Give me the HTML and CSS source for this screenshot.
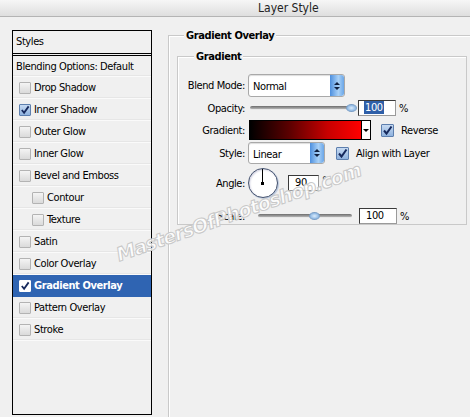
FILE: index.html
```html
<!DOCTYPE html>
<html>

<head>
    <title>Layer Style</title>
    <link rel="stylesheet" href="styles.css">
</head>

<body>
    <div class="titlebar"><span class="title">Layer Style</span></div>

    <div class="main">
        <div class="sidebar">
            <div class="styles-head">Styles</div>
            <div class="item plain">Blending Options: Default</div>
            <div class="item"><span class="cb"></span>Drop Shadow</div>
            <div class="item"><span class="cb on"><svg viewBox="0 0 11 11"><path d="M2 5.5 L4.5 8.5 L9.5 1.5" /></svg></span>Inner Shadow</div>
            <div class="item"><span class="cb"></span>Outer Glow</div>
            <div class="item"><span class="cb"></span>Inner Glow</div>
            <div class="item"><span class="cb"></span>Bevel and Emboss</div>
            <div class="item sub"><span class="cb"></span>Contour</div>
            <div class="item sub"><span class="cb"></span>Texture</div>
            <div class="item"><span class="cb"></span>Satin</div>
            <div class="item"><span class="cb"></span>Color Overlay</div>
            <div class="item selected"><span class="cb on"><svg viewBox="0 0 11 11"><path d="M2 5.5 L4.5 8.5 L9.5 1.5" /></svg></span>Gradient Overlay</div>
            <div class="item"><span class="cb"></span>Pattern Overlay</div>
            <div class="item"><span class="cb"></span>Stroke</div>
        </div>

        <div class="content">
            <div class="group outer">
                <div class="legend">Gradient Overlay</div>
                <div class="group inner">
                    <div class="legend">Gradient</div>
                    <div class="rows">
                        <div class="row row-blend">
                            <label>Blend Mode:</label>
                            <div class="select wide">Normal<span class="spin"><i class="up"></i><i class="down"></i></span></div>
                        </div>
                        <div class="row row-opacity">
                            <label>Opacity:</label>
                            <div class="slider opacity"><span class="thumb"></span></div>
                            <div class="field sel"><span>100</span></div>
                            <span class="unit">%</span>
                        </div>
                        <div class="row row-gradient">
                            <label>Gradient:</label>
                            <div class="swatch"></div>
                            <div class="drop"><i></i></div>
                            <span class="cb on big"><svg viewBox="0 0 11 11"><path d="M2 5.5 L4.5 8.5 L9.5 1.5" /></svg></span>
                            <span class="check-label">Reverse</span>
                        </div>
                        <div class="row row-style">
                            <label>Style:</label>
                            <div class="select narrow">Linear<span class="spin"><i class="up"></i><i class="down"></i></span></div>
                            <span class="cb on big"><svg viewBox="0 0 11 11"><path d="M2 5.5 L4.5 8.5 L9.5 1.5" /></svg></span>
                            <span class="check-label">Align with Layer</span>
                        </div>
                        <div class="row row-angle">
                            <label>Angle:</label>
                            <div class="dial"><span class="hand"></span><span class="dot"></span></div>
                            <div class="field angle">90</div>
                            <span class="deg">&deg;</span>
                        </div>
                        <div class="row row-scale">
                            <label>Scale:</label>
                            <div class="slider scale"><span class="thumb"></span></div>
                            <div class="field">100</div>
                            <span class="unit">%</span>
                        </div>
                    </div>
                </div>
            </div>
        </div>
    </div>

    <div class="watermark">MastersOfPhotoshop.com</div>
</body>

</html>
```

FILE: styles.css
```css
body {
    margin: 0;
    width: 470px;
    height: 417px;
    overflow: hidden;
    background: #f0f0f0;
    font-family: "DejaVu Sans Condensed", "Liberation Sans", sans-serif;
    font-size: 11px;
    letter-spacing: -0.4px;
    color: #000;
    position: relative;
}

.titlebar {
    height: 16px;
    border-bottom: 1px solid #b4b4b4;
    background: linear-gradient(#f6f6f6, #dedede);
    line-height: 16px;
}

.title {
    margin-left: 258px;
    font-size: 12px;
    letter-spacing: 0;
    color: #222;
}

.main {
    display: flex;
    height: 400px;
}

/* left list */
.sidebar {
    margin: 13px 0 0 12px;
    width: 138px;
    height: 383px;
    border: 1px solid #000;
}

.styles-head {
    height: 22px;
    line-height: 22px;
    padding-left: 3px;
    border-bottom: 3px double #000;
}

.item {
    height: 21px;
    display: flex;
    align-items: center;
    padding-left: 6px;
    border-bottom: 1px solid #fafafa;
    box-shadow: inset 0 -1px 0 #e6e6e6;
}

.item.plain {
    height: 20px;
    padding-left: 3px;
}

.item.sub {
    padding-left: 19px;
}

.item.selected {
    background: #2f64b2;
    color: #fff;
    font-weight: bold;
    border-bottom-color: #2f64b2;
    box-shadow: none;
}

.cb {
    width: 10px;
    height: 10px;
    margin-right: 3px;
    border: 1px solid #b3b3b3;
    border-radius: 1px;
    background: linear-gradient(#f4f4f4, #dadada);
    flex: none;
    display: inline-block;
    box-sizing: content-box;
}

.cb svg {
    display: block;
    width: 10px;
    height: 10px;
}

.cb path {
    fill: none;
    stroke: #16295c;
    stroke-width: 2;
}

.cb.on {
    border-color: #5d7fae;
    background: linear-gradient(#c6daf2, #8fb2de);
}

.selected .cb.on {
    border-color: #fff;
    background: #fff;
}

.cb.big {
    width: 11px;
    height: 11px;
}

.cb.big svg {
    width: 11px;
    height: 11px;
}

/* right side */
.content {
    margin-left: 16px;
    flex: 1;
}

.group {
    border-top: 1px solid #c9c9c9;
    border-left: 1px solid #c9c9c9;
    box-shadow: inset 1px 1px 0 #fff;
}

.outer {
    margin-top: 18px;
    height: 400px;
}

.legend {
    display: inline-block;
    margin-top: -7px;
    margin-left: 15px;
    padding: 0 2px;
    line-height: 13px;
    background: #f0f0f0;
    font-weight: bold;
    vertical-align: top;
}

.inner {
    margin: 7px 0 0 8px;
    width: 288px;
    height: 167px;
    border-right: 1px solid #c9c9c9;
    border-bottom: 1px solid #c9c9c9;
}

.inner .legend {
    margin-left: 16px;
}

.rows {
    margin-top: 4px;
}

.row {
    display: flex;
    align-items: center;
}

.row label {
    width: 67px;
    margin-right: 3px;
    text-align: right;
}

.row-blend { height: 23px; }
.row-opacity { height: 22px; }
.row-gradient { height: 22px; }
.row-style { height: 24px; }
.row-angle { height: 36px; }
.row-scale { height: 30px; }

.select {
    position: relative;
    height: 21px;
    line-height: 23px;
    padding-left: 4px;
    box-sizing: border-box;
    background: #fff;
    border: 1px solid #a9a9a9;
    border-radius: 3px;
    box-shadow: inset 0 1px 1px #ddd;
}

.select.wide {
    width: 97px;
    height: 23px;
}

.select.narrow {
    width: 77px;
    height: 22px;
    margin-right: 11px;
}

.spin {
    position: absolute;
    right: 0;
    top: 0;
    bottom: 0;
    width: 14px;
    border-radius: 0 3px 3px 0;
    background: linear-gradient(90deg, #4d8fde, #a9d1f7 60%, #6aa6e8);
    display: flex;
    flex-direction: column;
    align-items: center;
    justify-content: center;
    gap: 2px;
}

.spin i {
    width: 0;
    height: 0;
    border-left: 3px solid transparent;
    border-right: 3px solid transparent;
}

.spin .up { border-bottom: 3px solid #102040; }
.spin .down { border-top: 3px solid #102040; }

.slider {
    position: relative;
    height: 3px;
    border-radius: 2px;
    background: linear-gradient(#6d6d6d, #b4b4b4);
    border-bottom: 1px solid #e8e8e8;
}

.slider.opacity {
    width: 104px;
    margin: 0 4px 0 2px;
}

.slider.scale {
    width: 94px;
    margin: 0 7px 0 10px;
}

.thumb {
    position: absolute;
    top: -2px;
    width: 9px;
    height: 6px;
    border-radius: 50%;
    background: radial-gradient(#dcecfc, #6aa0d8);
    border: 1px solid #7c9fc6;
}

.opacity .thumb { left: 96px; }
.scale .thumb { left: 51px; }

.field {
    width: 38px;
    height: 16px;
    box-sizing: border-box;
    padding-left: 6px;
    line-height: 14px;
    background: #fff;
    border: 1px solid #9a9a9a;
    border-top-color: #3a3a3a;
    border-left-color: #3a3a3a;
}

.field.sel span {
    background: #2f5fa8;
    color: #fff;
    padding: 0 1px;
    margin-left: -1px;
}

.field.angle {
    width: 31px;
    margin-left: 10px;
}

.unit {
    margin-left: 3px;
}

.deg {
    margin: -6px 0 0 3px;
}

.swatch {
    margin-left: 1px;
    width: 112px;
    height: 20px;
    box-sizing: border-box;
    border: 1px solid #000;
    border-right: none;
    background: linear-gradient(90deg, #000 0%, #5a0000 35%, #c80000 70%, #ff0000 100%);
}

.drop {
    width: 10px;
    height: 20px;
    box-sizing: border-box;
    border: 1px solid #000;
    background: #fff;
    display: flex;
    align-items: center;
    justify-content: center;
    margin-right: 10px;
}

.drop i {
    width: 0;
    height: 0;
    border-left: 3px solid transparent;
    border-right: 3px solid transparent;
    border-top: 3px solid #000;
}

.check-label {
    margin-left: 4px;
}

.dial {
    position: relative;
    width: 28px;
    height: 28px;
    border: 1px solid #44526e;
    border-radius: 50%;
    background: #fff;
    box-shadow: 1px 1px 1px #b8c6dc, inset 1px 1px 2px #ccd;
}

.hand {
    position: absolute;
    left: 13px;
    top: 0;
    width: 1px;
    height: 15px;
    background: #000;
}

.dot {
    position: absolute;
    left: 12px;
    top: 13px;
    width: 3px;
    height: 3px;
    background: #000;
}

/* watermark over everything */
.watermark {
    position: absolute;
    left: 117px;
    top: 244px;
    transform: rotate(-19.5deg);
    transform-origin: left center;
    font-family: "DejaVu Sans", sans-serif;
    font-size: 19px;
    font-weight: bold;
    font-style: italic;
    color: rgba(255, 255, 255, 0.85);
    -webkit-text-stroke: 1px #c8c8c8;
    letter-spacing: -0.8px;
    pointer-events: none;
}
```
